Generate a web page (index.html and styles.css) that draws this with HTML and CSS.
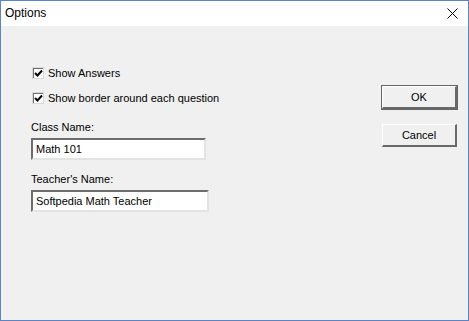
FILE: index.html
```html
<!DOCTYPE html>
<html lang="en">

<head>
    <meta charset="UTF-8">
    <title>Options</title>
    <link rel="stylesheet" href="styles.css">
</head>

<body>
    <div class="window">
        <div class="titlebar">
            <span class="title">Options</span>
            <svg class="close" viewBox="0 0 11 11" width="11" height="11">
                <path d="M0.5 0.5 L10.5 10.5 M10.5 0.5 L0.5 10.5" stroke="#000" stroke-width="1" fill="none"></path>
            </svg>
        </div>
        <div class="content">
            <div class="form">
                <label class="check">
                    <span class="box">
                        <svg viewBox="0 0 9 9" width="9" height="9">
                            <path d="M1 4 L3.5 6.5 L8 1.5" stroke="#000" stroke-width="2" fill="none"></path>
                        </svg>
                    </span>
                    Show Answers
                </label>
                <label class="check">
                    <span class="box">
                        <svg viewBox="0 0 9 9" width="9" height="9">
                            <path d="M1 4 L3.5 6.5 L8 1.5" stroke="#000" stroke-width="2" fill="none"></path>
                        </svg>
                    </span>
                    Show border around each question
                </label>
                <div class="field">
                    <div class="label">Class Name:</div>
                    <div class="input input-class">Math 101</div>
                </div>
                <div class="field">
                    <div class="label">Teacher's Name:</div>
                    <div class="input input-teacher">Softpedia Math Teacher</div>
                </div>
            </div>
            <div class="buttons">
                <div class="btn btn-default">OK</div>
                <div class="btn">Cancel</div>
            </div>
        </div>
    </div>
</body>

</html>
```

FILE: styles.css
```css
html,
body {
    margin: 0;
    padding: 0;
    font-family: "Liberation Sans", Arial, sans-serif;
    font-size: 11px;
    color: #000;
}

.window {
    width: 469px;
    height: 321px;
    box-sizing: border-box;
    border: 1px solid #5b83c8;
    display: flex;
    flex-direction: column;
    background-color: #f0f0f0;
}

.titlebar {
    height: 25px;
    background-color: #fff;
    display: flex;
    align-items: center;
    justify-content: space-between;
    padding: 0 10px 0 4px;
    flex-shrink: 0;
}

.title {
    font-size: 12px;
    margin-top: -1px;
}

.close {
    display: block;
}

.content {
    flex: 1;
    display: flex;
    justify-content: space-between;
}

.form {
    display: flex;
    flex-direction: column;
    padding: 39px 0 0 30px;
}

.check {
    display: flex;
    align-items: center;
    height: 16px;
    margin-bottom: 9px;
    white-space: nowrap;
}

.box {
    width: 9px;
    height: 9px;
    margin-left: 1px;
    margin-right: 4px;
    background-color: #fff;
    border-top: 2px solid #707070;
    border-left: 2px solid #707070;
    border-right: 1px solid #fff;
    border-bottom: 1px solid #fff;
    outline: 1px solid #d8d8d8;
    outline-offset: -1px;
    display: flex;
}

.field {
    display: flex;
    flex-direction: column;
}

.check + .field {
    margin-top: 4px;
}

.label {
    height: 16px;
    line-height: 16px;
    margin-bottom: 3px;
}

.input {
    box-sizing: border-box;
    height: 22px;
    background-color: #fff;
    border-top: 2px solid #6d6d6d;
    border-left: 2px solid #6d6d6d;
    border-right: 2px solid #e3e3e3;
    border-bottom: 2px solid #e3e3e3;
    padding: 0 3px;
    line-height: 18px;
    margin-bottom: 11px;
}

.input-class {
    width: 175px;
}

.input-teacher {
    width: 178px;
}

.buttons {
    display: flex;
    flex-direction: column;
    padding: 60px 11px 0 0;
    gap: 15px;
}

.btn {
    box-sizing: border-box;
    width: 75px;
    height: 23px;
    background-color: #f0f0f0;
    border-top: 1px solid #fff;
    border-left: 1px solid #fff;
    border-right: 2px solid #696969;
    border-bottom: 2px solid #696969;
    display: flex;
    align-items: center;
    justify-content: center;
}

.btn-default {
    box-shadow: 0 0 0 1px #646464;
}
```
